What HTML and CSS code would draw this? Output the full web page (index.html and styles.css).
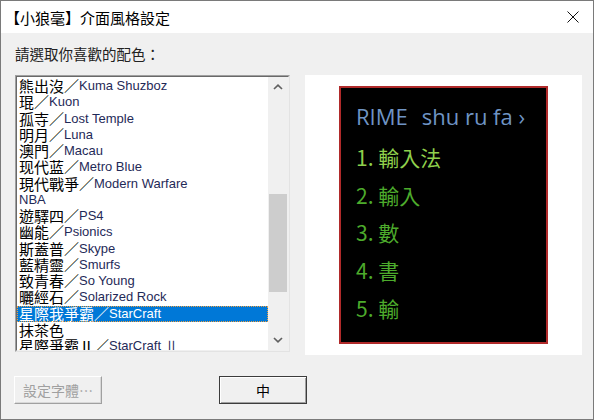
FILE: index.html
```html
<!DOCTYPE html>
<html lang="zh-Hant">
<head>
  <meta charset="UTF-8">
  <title>【小狼毫】介面風格設定</title>
  <link rel="stylesheet" href="styles.css">
</head>
<body>
  <div class="window">
    <div class="titlebar">
      <span class="title">【小狼毫】介面風格設定</span>
      <svg class="close" width="12" height="12" viewBox="0 0 12 12">
        <path d="M0.5 0.5 L11.5 11.5 M11.5 0.5 L0.5 11.5" stroke="#111" stroke-width="1" fill="none"/>
      </svg>
    </div>

    <div class="content">
      <div class="prompt">請選取你喜歡的配色：</div>

      <div class="main">
        <!-- color scheme list -->
        <div class="listbox">
          <div class="listbox-inner">
            <ul class="items">
              <li><span>熊出沒／</span><span class="en">Kuma Shuzboz</span></li>
              <li><span>琨／</span><span class="en">Kuon</span></li>
              <li><span>孤寺／</span><span class="en">Lost Temple</span></li>
              <li><span>明月／</span><span class="en">Luna</span></li>
              <li><span>澳門／</span><span class="en">Macau</span></li>
              <li><span>现代蓝／</span><span class="en">Metro Blue</span></li>
              <li><span>現代戰爭／</span><span class="en">Modern Warfare</span></li>
              <li><span class="en">NBA</span></li>
              <li><span>遊驛四／</span><span class="en">PS4</span></li>
              <li><span>幽能／</span><span class="en">Psionics</span></li>
              <li><span>斯蓋普／</span><span class="en">Skype</span></li>
              <li><span>藍精靈／</span><span class="en">Smurfs</span></li>
              <li><span>致青春／</span><span class="en">So Young</span></li>
              <li><span>曬經石／</span><span class="en">Solarized Rock</span></li>
              <li class="selected"><span>星際我爭霸／</span><span class="en">StarCraft</span></li>
              <li><span>抹茶色</span></li>
              <li><span>星際爭霸Ⅱ／</span><span class="en">StarCraft Ⅱ</span></li>
            </ul>
            <div class="scrollbar">
              <div class="arrow">
                <svg width="10" height="6" viewBox="0 0 10 6"><path d="M1 5 L5 1.2 L9 5" stroke="#606060" stroke-width="1.7" fill="none"/></svg>
              </div>
              <div class="track">
                <div class="thumb"></div>
              </div>
              <div class="arrow">
                <svg width="10" height="6" viewBox="0 0 10 6"><path d="M1 1 L5 4.8 L9 1" stroke="#606060" stroke-width="1.7" fill="none"/></svg>
              </div>
            </div>
          </div>
        </div>

        <!-- preview of the selected scheme -->
        <div class="preview">
          <div class="candidates">
            <div class="preedit"><span class="rime">RIME</span><span>shu ru fa ›</span></div>
            <div class="cand hilite">1. 輸入法</div>
            <div class="cand">2. 輸入</div>
            <div class="cand">3. 數</div>
            <div class="cand">4. 書</div>
            <div class="cand">5. 輸</div>
          </div>
        </div>
      </div>

      <div class="buttons">
        <button class="btn disabled">設定字體…</button>
        <button class="btn default">中</button>
      </div>
    </div>
  </div>
</body>
</html>
```

FILE: styles.css
```css
/* General Reset */
* {
  margin: 0;
  padding: 0;
  box-sizing: border-box;
}

body {
  font-family: "Noto Sans CJK TC", sans-serif;
  background: #f0f0f0;
}

/* Window frame */
.window {
  width: 594px;
  height: 420px;
  border: 1px solid #7a7a7a;
  background: #f0f0f0;
}

.titlebar {
  height: 32px;
  background: #fff;
  display: flex;
  align-items: center;
  justify-content: space-between;
  padding: 0 14px 0 4px;
}

.title {
  font-size: 15px;
  color: #000;
}

/* Dialog content */
.content {
  padding: 10px 11px 0 13px;
}

.prompt {
  font-size: 14.5px;
  line-height: 21px;
  color: #222;
  margin: 0 0 11px 1px;
}

.main {
  display: flex;
  align-items: flex-start;
}

/* List box */
.listbox {
  width: 275px;
  height: 277px;
  margin-left: 1px;
  border: 1px solid;
  border-color: #a0a0a0 #e3e3e3 #e3e3e3 #a0a0a0;
}

.listbox-inner {
  height: 100%;
  display: flex;
  background: #fff;
  border: 1px solid;
  border-color: #696969 #f0f0f0 #f0f0f0 #696969;
}

.items {
  list-style: none;
  flex: 1;
  padding-top: 1px;
  overflow: hidden;
}

.items li {
  height: 16.25px;
  display: flex;
  align-items: center;
  padding-left: 2px;
  font-size: 15px;
  line-height: 16px;
  color: #000;
  white-space: nowrap;
}

.items .en {
  font-family: "Liberation Sans", sans-serif;
  font-size: 13px;
  color: #1f2a58;
}

.items li.selected {
  background: #0078d7;
  color: #fff;
  outline: 1px dotted #f0a040;
  outline-offset: -1px;
}

.items li.selected .en {
  color: #fff;
}

/* Scroll bar */
.scrollbar {
  width: 20px;
  display: flex;
  flex-direction: column;
  background: #f0f0f0;
}

.arrow {
  height: 20px;
  display: flex;
  align-items: center;
  justify-content: center;
}

.track {
  flex: 1;
  padding: 97px 1px 0;
}

.thumb {
  height: 98px;
  background: #cdcdcd;
}

/* Preview */
.preview {
  width: 277px;
  height: 280px;
  margin-left: 15px;
  background: #fff;
  display: flex;
  align-items: center;
  justify-content: center;
}

.candidates {
  width: 209px;
  height: 258px;
  background: #000;
  border: 2px solid #b02a2a;
  padding: 13px 0 0 15px;
}

.preedit {
  font-family: "Open Sans", sans-serif;
  font-size: 22px;
  line-height: 30px;
  color: #6f94c4;
  margin-bottom: 8px;
}

.rime {
  margin-right: 14px;
}

.cand {
  font-size: 21px;
  line-height: 37.7px;
  color: #4dab2c;
}

.cand.hilite {
  color: #8fd04c;
}

/* Buttons */
.buttons {
  display: flex;
  gap: 117px;
  margin-top: 21px;
}

.btn {
  width: 88px;
  height: 28px;
  font-family: "Noto Sans CJK TC", sans-serif;
  font-size: 14px;
  background: #f0f0f0;
  border: 1px solid;
}

.btn.disabled {
  color: #a0a0a0;
  border-color: #fff #a0a0a0 #a0a0a0 #fff;
  box-shadow: inset -1px -1px 0 #d8d8d8;
}

.btn.default {
  color: #000;
  border-color: #3c3c3c;
  box-shadow: inset 1px 1px 0 #fff, inset -1px -1px 0 #a0a0a0;
}
```
